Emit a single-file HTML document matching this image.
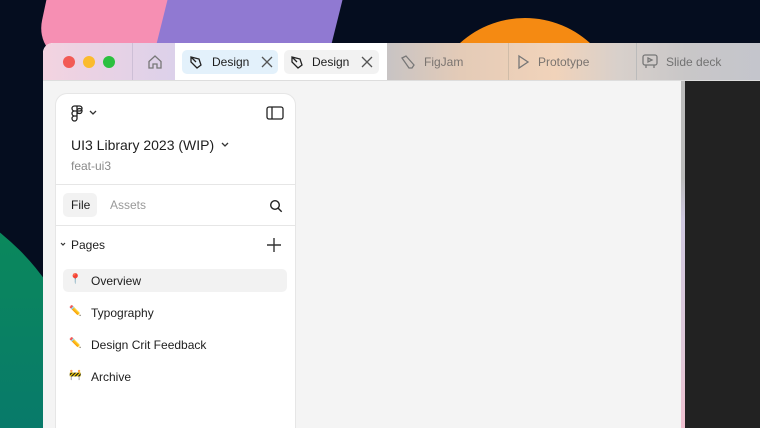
<!DOCTYPE html>
<html style="width:760px;height:428px;overflow:hidden"><head><meta charset="utf-8"><style>
*{margin:0;padding:0;box-sizing:border-box}
body{width:760px;height:428px;overflow:hidden;background:#050d1f;position:relative;font-family:"Liberation Sans",sans-serif;color:#1e1e1e}
.abs{position:absolute}
.t{font-size:12px;position:absolute;white-space:nowrap}
</style></head><body>
<div class="abs" style="left:0;top:0;width:760px;height:428px;overflow:hidden">
<div class="abs" style="left:40px;top:0;width:150px;height:60px;background:#f68fb3;transform:skewX(-12deg);border-radius:0 0 0 40px"></div>
<div class="abs" style="left:160px;top:0;width:175px;height:60px;background:#9079d2;transform:skewX(-14deg)"></div>
<div class="abs" style="left:428px;top:18px;width:194px;height:194px;border-radius:50%;background:#f58a12"></div>
<div class="abs" style="left:-390px;top:180px;width:480px;height:248px;border-radius:240px 240px 0 0;background:linear-gradient(#0b8c58,#087a6a)"></div>
<div class="abs" style="left:43px;top:43px;width:717px;height:385px;background:#f4f4f4;border-radius:10px 0 0 0;overflow:hidden">
 <div class="abs" style="left:0;top:0;width:717px;height:37px;background:#fff"></div>
 <div class="abs" style="left:0;top:0;width:132px;height:37px;background:linear-gradient(90deg,#f3d3e0,#dcd1ea)"></div>
 <div class="abs" style="left:89px;top:0;width:1px;height:37px;background:#cdbfd6"></div>
 <div class="abs" style="left:344px;top:0;width:373px;height:37px;background:linear-gradient(90deg,#c8c4c4 0%,#e4cbb7 20%,#f1d3ba 45%,#d8d0cb 62%,#c9c7c8 80%,#c4c5cc 100%)"></div>
 <div class="abs" style="left:465px;top:0;width:1px;height:37px;background:#d0bca8"></div>
 <div class="abs" style="left:593px;top:0;width:1px;height:37px;background:#bbb"></div>
 <div class="abs" style="left:0;top:37px;width:717px;height:1px;background:#ddd"></div>
 <div class="abs" style="left:20px;top:13px;width:12px;height:12px;border-radius:50%;background:#f25a55"></div>
 <div class="abs" style="left:40px;top:13px;width:12px;height:12px;border-radius:50%;background:#fbbb2d"></div>
 <div class="abs" style="left:60px;top:13px;width:12px;height:12px;border-radius:50%;background:#2cc03f"></div>
 <svg class="abs" style="left:104px;top:11px" width="16" height="16" viewBox="0 0 16 16" fill="none" stroke="#777" stroke-width="1.3"><path d="M2 7.5L8 2l6 5.5V14H10V10H6v4H2z"/></svg>
 <div class="abs" style="left:139px;top:7px;width:96px;height:24px;background:#e3f1fb;border-radius:5px"></div>
 <div class="abs" style="left:241px;top:7px;width:95px;height:24px;background:#f2f2f2;border-radius:5px"></div>
 <svg class="abs" style="left:145px;top:11px" width="16" height="16" viewBox="0 0 16 16" fill="none" stroke="#222" stroke-width="1.3"><path d="M3 3l8 2 2 6-4 3-6-6z M3 3l5 5"/></svg>
 <div class="t" style="left:169px;top:12px">Design</div>
 <svg class="abs" style="left:218px;top:13px" width="12" height="12" stroke="#555" stroke-width="1.3"><path d="M1 1l10 10M11 1L1 11"/></svg>
 <svg class="abs" style="left:246px;top:11px" width="16" height="16" viewBox="0 0 16 16" fill="none" stroke="#222" stroke-width="1.3"><path d="M3 3l8 2 2 6-4 3-6-6z M3 3l5 5"/></svg>
 <div class="t" style="left:269px;top:12px">Design</div>
 <svg class="abs" style="left:318px;top:13px" width="12" height="12" stroke="#555" stroke-width="1.3"><path d="M1 1l10 10M11 1L1 11"/></svg>
 <svg class="abs" style="left:357px;top:11px" width="16" height="16" fill="none" stroke="#777" stroke-width="1.3"><path d="M2 4l4-2 8 9-2 3-3 0z"/></svg>
 <div class="t" style="left:381px;top:12px;color:#7a7470">FigJam</div>
 <svg class="abs" style="left:473px;top:11px" width="14" height="16" fill="none" stroke="#777" stroke-width="1.3"><path d="M3 2l9 6-9 6z"/></svg>
 <div class="t" style="left:495px;top:12px;color:#7a7470">Prototype</div>
 <svg class="abs" style="left:599px;top:10px" width="16" height="17" fill="none" stroke="#777" stroke-width="1.3"><rect x="1" y="2" width="14" height="10" rx="2"/><path d="M6 5l4 2-4 2z M4 12v3M12 12v3"/></svg>
 <div class="t" style="left:623px;top:12px;color:#727272">Slide deck</div>
 <div class="abs" style="left:638px;top:38px;width:4px;height:347px;background:linear-gradient(#bbb 0%,#bbb 28%,#cfc8e0 40%,#e0c8d8 80%,#f0c0d0)"></div>
 <div class="abs" style="left:642px;top:38px;width:75px;height:347px;background:#222"></div>
 <div class="abs" style="left:12px;top:50px;width:241px;height:335px;background:#fff;border-radius:12px 12px 0 0;border:1px solid #e6e6e6;border-bottom:none">
  <svg class="abs" style="left:14px;top:10px" width="14" height="18" fill="none" stroke="#222" stroke-width="1.3"><path d="M7 2H4.5a2.5 2.5 0 000 5H7zM7 2h2.5a2.5 2.5 0 010 5H7zM7 7H4.5a2.5 2.5 0 000 5H7zM7 7v0a2.5 2.5 0 105 0a2.5 2.5 0 10-5 0M7 12v2.5a2.5 2.5 0 11-2.5-2.5"/></svg>
  <svg class="abs" style="left:33px;top:16px" width="8" height="6" fill="none" stroke="#333" stroke-width="1.3"><path d="M1 1l3 3 3-3"/></svg>
  <svg class="abs" style="left:210px;top:12px" width="18" height="14" fill="none" stroke="#222" stroke-width="1.3"><rect x="1" y="1" width="16" height="12" rx="2"/><path d="M6 1v12"/></svg>
  <div class="t" style="left:15px;top:43px;font-size:14px">UI3 Library 2023 (WIP)</div>
  <svg class="abs" style="left:165px;top:48px" width="8" height="6" fill="none" stroke="#333" stroke-width="1.3"><path d="M1 1l3 3 3-3"/></svg>
  <div class="t" style="left:15px;top:65px;color:#8a8a8a">feat-ui3</div>
  <div class="abs" style="left:0;top:90px;width:239px;height:1px;background:#e6e6e6"></div>
  <div class="abs" style="left:7px;top:99px;width:34px;height:24px;background:#f2f2f2;border-radius:5px"></div>
  <div class="t" style="left:15px;top:104px">File</div>
  <div class="t" style="left:54px;top:104px;color:#999">Assets</div>
  <svg class="abs" style="left:213px;top:105px" width="14" height="14" fill="none" stroke="#222" stroke-width="1.4"><circle cx="6" cy="6" r="4.3"/><path d="M9.2 9.2l3.5 3.5"/></svg>
  <div class="abs" style="left:0;top:131px;width:239px;height:1px;background:#e6e6e6"></div>
  <svg class="abs" style="left:4px;top:148px" width="6" height="5" fill="none" stroke="#333" stroke-width="1.2"><path d="M1 1l2 2 2-2"/></svg>
  <div class="t" style="left:15px;top:144px">Pages</div>
  <svg class="abs" style="left:210px;top:143px" width="16" height="16" stroke="#333" stroke-width="1.4"><path d="M8 1v14M1 8h14"/></svg>
  <div class="abs" style="left:7px;top:175px;width:224px;height:23px;background:#f2f2f2;border-radius:5px"></div>
  <div class="t" style="left:13px;top:180px;font-size:10px;color:#d33">📍</div>
  <div class="t" style="left:35px;top:180px">Overview</div>
  <div class="t" style="left:13px;top:212px;font-size:10px">✏️</div>
  <div class="t" style="left:35px;top:212px">Typography</div>
  <div class="t" style="left:13px;top:244px;font-size:10px">✏️</div>
  <div class="t" style="left:35px;top:244px">Design Crit Feedback</div>
  <div class="t" style="left:13px;top:276px;font-size:10px;color:#c90">🚧</div>
  <div class="t" style="left:35px;top:276px">Archive</div>
 </div>
</div>
</div>
</body></html>
